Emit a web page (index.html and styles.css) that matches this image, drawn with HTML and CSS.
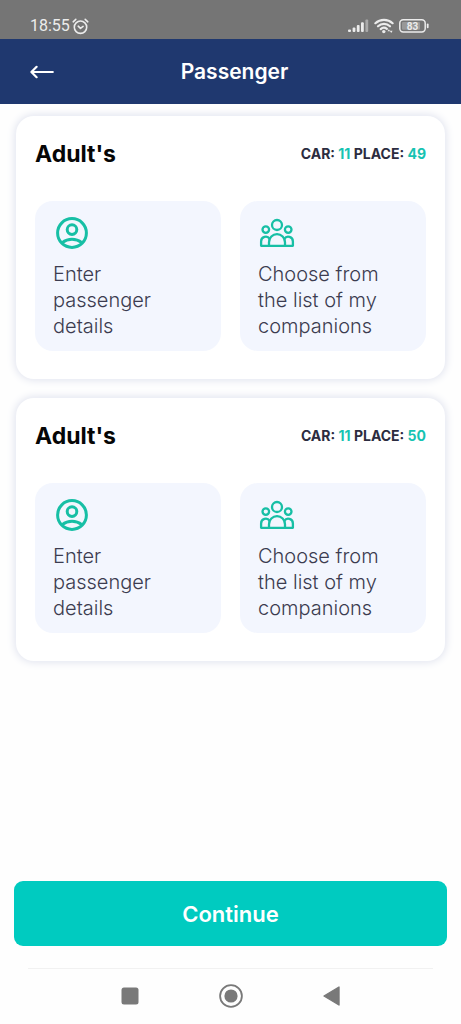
FILE: index.html
```html
<!DOCTYPE html>
<html lang="en">
<head>
<meta charset="utf-8">
<meta name="viewport" content="width=device-width, initial-scale=1">
<title>Passenger</title>
<link rel="stylesheet" href="styles.css">
</head>
<body>
<svg class="sprite" aria-hidden="true">
  <symbol id="user" viewBox="0 0 32 32">
    <g fill="none" stroke="currentColor" stroke-width="3">
      <circle cx="16" cy="16" r="14.4"/>
      <circle cx="16" cy="12.6" r="4.8"/>
      <path d="M6.2 25.6c5.8-4.6 13.8-4.6 19.6 0"/>
    </g>
  </symbol>
  <symbol id="group" viewBox="0 0 36 32">
    <g fill="none" stroke="currentColor" stroke-width="2.3" stroke-linejoin="round">
      <circle cx="18" cy="8" r="5"/>
      <circle cx="6.8" cy="12.6" r="3.3"/>
      <circle cx="29.2" cy="12.6" r="3.3"/>
      <path d="M10 28.8v-3.6a8 8 0 0 1 16 0v3.6z"/>
      <path d="M10 28.8H2.1v-4.4a4.7 4.7 0 0 1 8.6-2.6"/>
      <path d="M26 28.8h7.9v-4.4a4.7 4.7 0 0 0-8.6-2.6"/>
    </g>
  </symbol>
</svg>

<div class="status">
  <div class="status-group status-left">
    <span class="time">18:55</span>
    <svg width="17" height="17" viewBox="0 0 17 17" fill="none" stroke="currentColor" stroke-width="1.6" stroke-linecap="round" stroke-linejoin="round">
      <circle cx="8.5" cy="9.2" r="6.2"/>
      <path d="M1.2 3.8l2.6-2.4M15.8 3.8l-2.6-2.4M6.2 8.2l2.3 2.2 2.6-2"/>
    </svg>
  </div>
  <div class="status-group status-right">
    <svg width="21" height="14" viewBox="0 0 21 14" fill="currentColor">
      <rect x="0" y="10.5" width="3" height="2.5" rx="1"/>
      <rect x="4.6" y="8.5" width="2.8" height="4.5" rx="1"/>
      <rect x="8.8" y="6" width="2.8" height="7" rx="1"/>
      <rect x="13" y="3.3" width="2.8" height="9.7" rx="1"/>
      <rect x="17.4" y="0.5" width="2.8" height="12.5" rx="1" opacity=".45"/>
    </svg>
    <svg width="20" height="16" viewBox="0 0 20 16">
      <g fill="none" stroke="currentColor" stroke-width="2.2" stroke-linecap="round">
        <path d="M1.4 5.2a12.6 12.6 0 0 1 17.2 0"/>
        <path d="M4 8.3a8.8 8.8 0 0 1 12 0"/>
        <path d="M6.7 11.1a4.9 4.9 0 0 1 6.2-.2"/>
      </g>
      <circle cx="9.8" cy="13.6" r="1.7" fill="currentColor"/>
      <path d="M13.5 13.2l1.4-2 1.2 2zM15.8 12.8h2.8l-1.4 2.2z" fill="currentColor"/>
    </svg>
    <svg width="30" height="14" viewBox="0 0 30 14">
      <rect x=".8" y=".8" width="25.4" height="12.2" rx="3.4" fill="none" stroke="currentColor" stroke-width="1.5"/>
      <rect x="3" y="3" width="18" height="7.8" rx="1" fill="currentColor" opacity=".3"/>
      <rect x="27.8" y="4.6" width="1.8" height="4.6" rx=".9" fill="currentColor"/>
      <text class="battery-text" x="13.5" y="10.5" text-anchor="middle">83</text>
    </svg>
  </div>
</div>

<header class="topbar">
  <button class="back" type="button" aria-label="Back">
    <svg width="24" height="14" viewBox="0 0 24 14" fill="none" stroke="currentColor" stroke-width="2.2" stroke-linecap="round" stroke-linejoin="round"><path d="M22.8 7H1.4M6.6 1.8L1.4 7l5.2 5.2"/></svg>
  </button>
  <h1 class="title">Passenger</h1>
</header>

<main class="content">
  <section class="card">
    <div class="card-head">
      <h2 class="card-title">Adult's</h2>
      <p class="seat">CAR: <span class="num">11</span> PLACE: <span class="num">49</span></p>
    </div>
    <div class="tiles">
      <button class="tile" type="button">
        <svg class="icon"><use href="#user"/></svg>
        <span>Enter passenger details</span>
      </button>
      <button class="tile" type="button">
        <svg class="icon"><use href="#group"/></svg>
        <span>Choose from the list of my companions</span>
      </button>
    </div>
  </section>
  <section class="card">
    <div class="card-head">
      <h2 class="card-title">Adult's</h2>
      <p class="seat">CAR: <span class="num">11</span> PLACE: <span class="num">50</span></p>
    </div>
    <div class="tiles">
      <button class="tile" type="button">
        <svg class="icon"><use href="#user"/></svg>
        <span>Enter passenger details</span>
      </button>
      <button class="tile" type="button">
        <svg class="icon"><use href="#group"/></svg>
        <span>Choose from the list of my companions</span>
      </button>
    </div>
  </section>
</main>

<footer class="footer">
  <button class="continue" type="button">Continue</button>
</footer>

<nav class="sysnav" aria-label="System">
  <button class="sys" type="button" aria-label="Recent apps">
    <svg width="24" height="24" viewBox="0 0 24 24"><rect x="3.5" y="3.5" width="17" height="17" rx="2.5" fill="currentColor"/></svg>
  </button>
  <button class="sys" type="button" aria-label="Home">
    <svg width="24" height="24" viewBox="0 0 24 24"><circle cx="12" cy="12" r="10.9" fill="none" stroke="currentColor" stroke-width="1.8"/><circle cx="12" cy="12" r="6.6" fill="currentColor"/></svg>
  </button>
  <button class="sys" type="button" aria-label="Back to previous screen">
    <svg width="24" height="24" viewBox="0 0 24 24"><path d="M4 12L19 3v18z" fill="currentColor" stroke="currentColor" stroke-width="1.4" stroke-linejoin="round"/></svg>
  </button>
</nav>
</body>
</html>
```

FILE: styles.css
```css
* {
  box-sizing: border-box;
}

body {
  margin: 0;
  min-height: 100vh;
  display: flex;
  flex-direction: column;
  background: #fefefe;
  color: #3c3c50;
  font-family: Inter, "Open Sans", sans-serif;
}

h1, h2, p {
  margin: 0;
}

button {
  border: 0;
  padding: 0;
  font: inherit;
  color: inherit;
  background: none;
  cursor: pointer;
}

svg {
  display: block;
}

.sprite {
  display: none;
}

.status {
  display: flex;
  justify-content: space-between;
  padding: 13px 32px 0 30px;
  background: #757575;
  color: #ececec;
}

.status-group {
  display: flex;
  align-items: center;
  height: 26px;
}

.status-left {
  gap: 2px;
}

.status-right {
  gap: 5px;
}

.time {
  font: 400 16px/26px Roboto, sans-serif;
}

.battery-text {
  font: 700 10px Roboto, sans-serif;
  fill: currentColor;
}

.topbar {
  display: grid;
  grid-template-columns: 1fr auto 1fr;
  align-items: center;
  height: 65px;
  padding: 0 16px 0 24px;
  background: #1f386f;
  color: #fff;
}

.back {
  justify-self: start;
  padding: 10px 6px;
}

.title {
  font-size: 21px;
  font-weight: 600;
  line-height: 28px;
}

.content {
  flex: 1;
  display: flex;
  flex-direction: column;
  gap: 19px;
  padding: 12px 16px;
}

.card {
  padding: 22px 19px 28px;
  border-radius: 18px;
  background: #fff;
  box-shadow: 0 0 8px 1px #dfe2ee;
}

.card-head {
  display: flex;
  justify-content: space-between;
  align-items: center;
  margin-bottom: 31px;
}

.card-title {
  color: #060606;
  font-size: 23px;
  font-weight: 700;
  line-height: 32px;
}

.seat {
  color: #2c2c40;
  font-size: 14px;
  font-weight: 700;
  line-height: 32px;
}

.num {
  color: #17c3b2;
}

.tiles {
  display: grid;
  grid-template-columns: 1fr 1fr;
  gap: 19px;
}

.tile {
  display: flex;
  flex-direction: column;
  align-items: flex-start;
  gap: 12px;
  padding: 16px 18px 12px;
  border-radius: 18px;
  background: #f3f6fe;
  font-size: 20px;
  font-weight: 300;
  line-height: 26px;
  text-align: left;
}

.icon {
  width: 38px;
  height: 32px;
  color: #17bfa5;
}

.footer {
  padding: 0 14px 22px;
}

.continue {
  width: 100%;
  height: 65px;
  border-radius: 9px;
  background: #00cbc0;
  color: #fff;
  font-size: 22px;
  font-weight: 600;
}

.sysnav {
  display: flex;
  justify-content: center;
  gap: 77px;
  margin: 0 28px;
  padding: 15px 0 16px;
  border-top: 1px solid #f1f1f1;
  color: #797979;
}
```
